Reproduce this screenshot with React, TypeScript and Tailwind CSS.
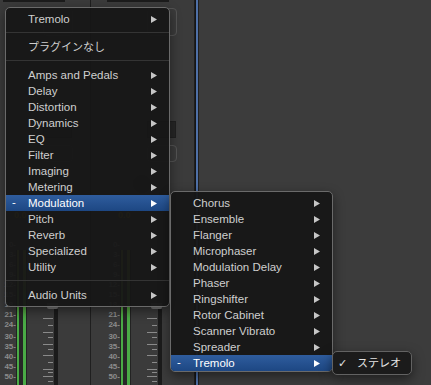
import React from 'react';

const mainItems = [
  'Amps and Pedals',
  'Delay',
  'Distortion',
  'Dynamics',
  'EQ',
  'Filter',
  'Imaging',
  'Metering',
  'Modulation',
  'Pitch',
  'Reverb',
  'Specialized',
  'Utility',
];

const subItems = [
  'Chorus',
  'Ensemble',
  'Flanger',
  'Microphaser',
  'Modulation Delay',
  'Phaser',
  'Ringshifter',
  'Rotor Cabinet',
  'Scanner Vibrato',
  'Spreader',
  'Tremolo',
];

const scale = ['0', '3', '6', '9', '12', '15', '18', '21', '24', '30', '35', '40', '45', '50'];

const ticks = [
  { cls: 'mt-[78px]', long: true },
  { cls: 'mt-[6px]', long: false },
  { cls: 'mt-[6px]', long: true },
  { cls: 'mt-[4px]', long: false },
  { cls: 'mt-[6px]', long: true },
  { cls: 'mt-[4px]', long: false },
  { cls: 'mt-[5px]', long: true },
  { cls: 'mt-[6px]', long: false },
  { cls: 'mt-[6px]', long: true },
  { cls: 'mt-[2px]', long: false },
  { cls: 'mt-[3px]', long: true },
  { cls: 'mt-[4px]', long: false },
];

const Arrow = ({ active }: { active?: boolean }) => (
  <svg width="6" height="7" viewBox="0 0 6 7" className="shrink-0">
    <path d="M0 0 L6 3.5 L0 7 Z" fill={active ? '#ffffff' : '#c6c6c6'} />
  </svg>
);

const Row = ({ label, active, arrow = true, jp }: { label: string; active?: boolean; arrow?: boolean; jp?: boolean }) => (
  <div
    className={`flex h-[16px] items-center pr-[12px] ${
      active ? 'bg-gradient-to-b from-[#2f5d9e] to-[#1d4783] text-white' : 'text-[#cfcfcf]'
    }`}
  >
    <span className="w-[22px] pl-[6px] text-[11.5px] leading-none">{active ? '-' : ''}</span>
    <span className={`flex-1 pt-px leading-none ${jp ? 'text-[11px]' : 'text-[11.5px]'}`}>{label}</span>
    {arrow && <Arrow active={active} />}
  </div>
);

const Sep = () => <div className="mt-[5px] mb-[6px] h-px bg-[#343434]" />;

function Strip() {
  return (
    <div className="flex h-full w-[104px] shrink-0 flex-col overflow-hidden border-r border-[#1f1f1f] bg-[#3b3b3b]">
      {/* upper controls, mostly hidden under the menu */}
      <div className="flex h-[240px] shrink-0 flex-col">
        <div className="ml-[16px] h-[2px] w-[62px] bg-[#1c1c1c]" />
        <div className="mt-[6px] ml-[56px] h-[28px] w-[30px] rounded-[4px] border border-[#555]" />
        <div className="mt-[85px] ml-[56px] h-[17px] w-[29px] border border-[#202020] bg-[#262626]" />
        <div className="mt-[7px] ml-[56px] h-[17px] w-[30px] rounded-[4px] border border-[#555]" />
        <div className="mt-[13px] flex items-center">
          <div className="ml-[42px] h-[18px] w-[18px] rounded-full bg-[#2a2a2a]" />
        </div>
        <div className="mt-[18px] ml-[27px] text-[9px] font-bold leading-none text-[#a69120]">0.0</div>
      </div>
      {/* meter + fader */}
      <div className="flex min-h-0 flex-1 flex-row overflow-hidden">
        <div className="ml-[19px] flex w-[10px] shrink-0 flex-col">
          {scale.map((s) => (
            <div
              key={s}
              className={`flex h-[10px] shrink-0 items-center justify-end text-[8px] font-bold leading-none text-[#8c8c8c] ${
                s === '30' ? 'mt-[2px]' : ''
              }`}
            >
              {s}-
            </div>
          ))}
        </div>
        <div className="mt-[10px] flex shrink-0">
          <div className="w-px bg-[#232323]" />
          <div className="w-[2px] bg-gradient-to-b from-[#8a9a2a] via-[#4aab46] to-[#4aab46]" />
          <div className="w-[4px] bg-[#272727]" />
          <div className="w-[3px] bg-gradient-to-b from-[#8a9a2a] via-[#4aab46] to-[#4aab46]" />
          <div className="w-px bg-[#232323]" />
        </div>
        <div className="ml-[16px] flex w-[10px] shrink-0 flex-col items-end">
          {ticks.map((t, i) => (
            <div key={i} className={`${t.cls} h-px shrink-0 bg-[#8a8a8a] ${t.long ? 'w-[10px]' : 'w-[5px]'}`} />
          ))}
        </div>
        <div className="mt-[63px] ml-[-6px] flex w-[11px] shrink-0 flex-col items-end">
          <div className="h-[6px] w-[11px] shrink-0 rounded-b-[2px] bg-[#7a7a7a]" />
          <div className="w-[4px] flex-1 bg-[#1b1b1b]" />
        </div>
      </div>
    </div>
  );
}

export default function App() {
  return (
    <div
      className="relative h-[385px] w-[431px] overflow-hidden bg-[#3c3c3c]"
      style={{ fontFamily: '"Liberation Sans", Arial, "Noto Sans CJK JP", sans-serif' }}
    >
      {/* mixer background */}
      <div className="flex h-full">
        <div className="ml-[-13px] flex h-full">
          <Strip />
          <Strip />
        </div>
        <div className="flex h-full">
          <div className="w-px bg-[#151515]" />
          <div className="w-[2px] bg-[#4f71a8]" />
          <div className="w-px bg-[#222]" />
        </div>
        <div className="flex-1 bg-[#3c3c3c]" />
      </div>

      {/* main plug-in menu */}
      <div className="absolute left-[5px] top-[7px] w-[165px] rounded-[5px] border border-[#6a6a6a] bg-[#161616]/95 pt-[3px] pb-[3px] shadow-[0_4px_12px_rgba(0,0,0,0.45)]">
        <Row label="Tremolo" />
        <Sep />
        <Row label="プラグインなし" arrow={false} jp />
        <Sep />
        {mainItems.map((it) => (
          <Row key={it} label={it} active={it === 'Modulation'} />
        ))}
        <Sep />
        <Row label="Audio Units" />
      </div>

      {/* Modulation submenu */}
      <div className="absolute left-[170px] top-[191px] w-[163px] overflow-hidden rounded-[5px] border border-[#6a6a6a] bg-[#161616]/95 pt-[3px] shadow-[0_4px_12px_rgba(0,0,0,0.45)]">
        {subItems.map((it) => (
          <Row key={it} label={it} active={it === 'Tremolo'} />
        ))}
      </div>

      {/* channel mode submenu */}
      <div className="absolute left-[332px] top-[351px] flex h-[24px] w-[80px] items-center rounded-[5px] border border-[#626262] bg-[#1b1b1b] shadow-[0_4px_12px_rgba(0,0,0,0.5)]">
        <span className="w-[24px] pl-[5px] text-[11px] leading-none text-[#e4e4e4]" style={{ fontFamily: '"DejaVu Sans", sans-serif' }}>
          ✓
        </span>
        <span className="text-[11px] leading-none text-[#e4e4e4]">ステレオ</span>
      </div>
    </div>
  );
}
